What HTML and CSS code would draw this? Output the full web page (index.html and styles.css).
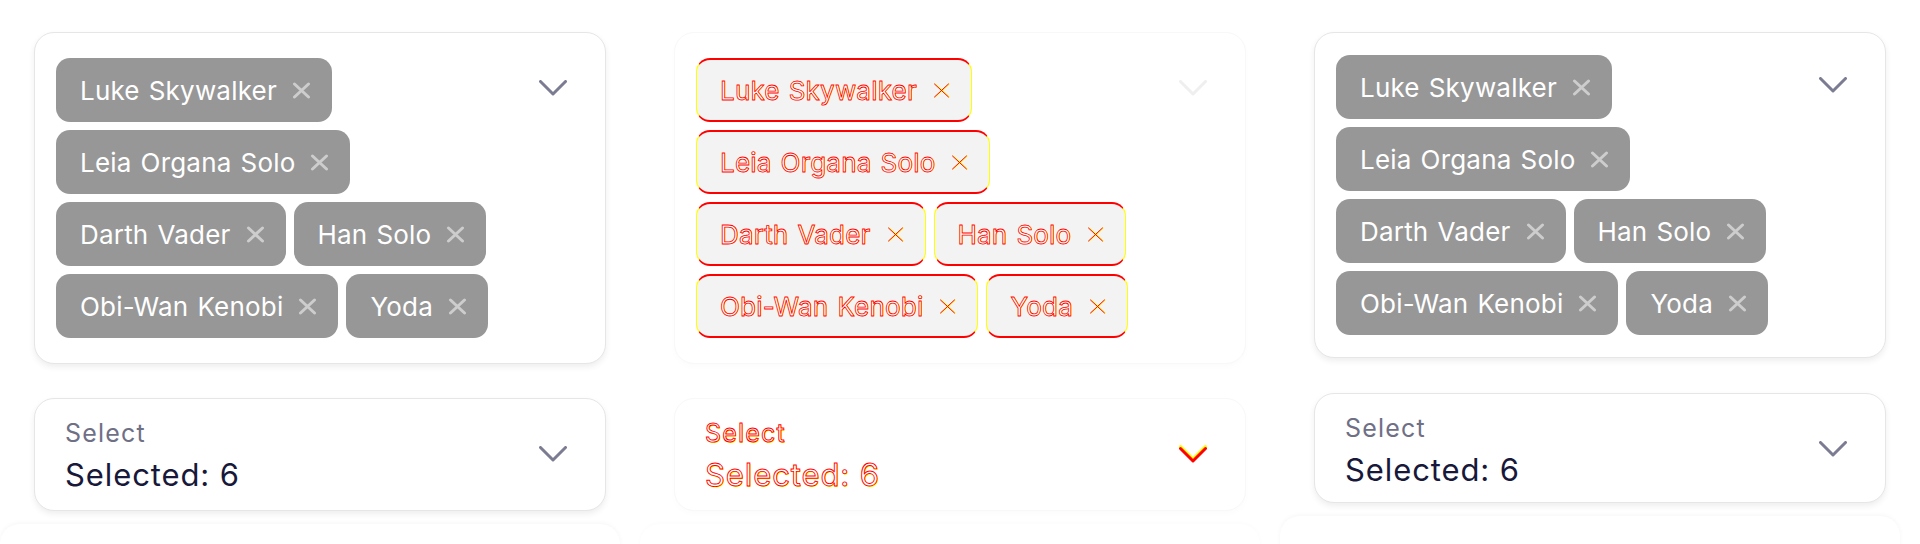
FILE: index.html
```html
<!DOCTYPE html>
<html lang="en">
<head>
<meta charset="utf-8">
<title>Multi select</title>
<link rel="stylesheet" href="styles.css">
</head>
<body>
<div class="grid">
  <section class="col col-a">
    <div class="card">
      <div class="chips">
        <span class="chip"><span class="chip-label">Luke Skywalker</span><svg class="chip-x" viewBox="0 0 19 17"><path d="M2.5 2 L16.5 15 M16.5 2 L2.5 15"/></svg></span>
        <span class="chip"><span class="chip-label">Leia Organa Solo</span><svg class="chip-x" viewBox="0 0 19 17"><path d="M2.5 2 L16.5 15 M16.5 2 L2.5 15"/></svg></span>
        <span class="chip"><span class="chip-label">Darth Vader</span><svg class="chip-x" viewBox="0 0 19 17"><path d="M2.5 2 L16.5 15 M16.5 2 L2.5 15"/></svg></span>
        <span class="chip"><span class="chip-label">Han Solo</span><svg class="chip-x" viewBox="0 0 19 17"><path d="M2.5 2 L16.5 15 M16.5 2 L2.5 15"/></svg></span>
        <span class="chip"><span class="chip-label">Obi-Wan Kenobi</span><svg class="chip-x" viewBox="0 0 19 17"><path d="M2.5 2 L16.5 15 M16.5 2 L2.5 15"/></svg></span>
        <span class="chip"><span class="chip-label">Yoda</span><svg class="chip-x" viewBox="0 0 19 17"><path d="M2.5 2 L16.5 15 M16.5 2 L2.5 15"/></svg></span>
      </div>
      <svg class="chev" viewBox="0 0 28 16"><path d="M1.5 1.5 L14 14 L26.5 1.5"/></svg>
    </div>
    <div class="select">
      <div class="select-text">
        <div class="select-label">Select</div>
        <div class="select-value">Selected: 6</div>
      </div>
      <svg class="chev" viewBox="0 0 28 16"><path d="M1.5 1.5 L14 14 L26.5 1.5"/></svg>
    </div>
    <div class="tail"></div>
  </section>

  <section class="col col-b">
    <div class="card">
      <div class="chips">
        <span class="chip"><span class="chip-label">Luke Skywalker</span><svg class="chip-x" viewBox="0 0 19 17"><path class="x-y" d="M3.5 2 L17.5 15 M17.5 2 L3.5 15"/><path d="M2.5 2 L16.5 15 M16.5 2 L2.5 15"/></svg></span>
        <span class="chip"><span class="chip-label">Leia Organa Solo</span><svg class="chip-x" viewBox="0 0 19 17"><path class="x-y" d="M3.5 2 L17.5 15 M17.5 2 L3.5 15"/><path d="M2.5 2 L16.5 15 M16.5 2 L2.5 15"/></svg></span>
        <span class="chip"><span class="chip-label">Darth Vader</span><svg class="chip-x" viewBox="0 0 19 17"><path class="x-y" d="M3.5 2 L17.5 15 M17.5 2 L3.5 15"/><path d="M2.5 2 L16.5 15 M16.5 2 L2.5 15"/></svg></span>
        <span class="chip"><span class="chip-label">Han Solo</span><svg class="chip-x" viewBox="0 0 19 17"><path class="x-y" d="M3.5 2 L17.5 15 M17.5 2 L3.5 15"/><path d="M2.5 2 L16.5 15 M16.5 2 L2.5 15"/></svg></span>
        <span class="chip"><span class="chip-label">Obi-Wan Kenobi</span><svg class="chip-x" viewBox="0 0 19 17"><path class="x-y" d="M3.5 2 L17.5 15 M17.5 2 L3.5 15"/><path d="M2.5 2 L16.5 15 M16.5 2 L2.5 15"/></svg></span>
        <span class="chip"><span class="chip-label">Yoda</span><svg class="chip-x" viewBox="0 0 19 17"><path class="x-y" d="M3.5 2 L17.5 15 M17.5 2 L3.5 15"/><path d="M2.5 2 L16.5 15 M16.5 2 L2.5 15"/></svg></span>
      </div>
      <svg class="chev" viewBox="0 0 28 16"><path d="M1.5 1.5 L14 14 L26.5 1.5"/></svg>
    </div>
    <div class="select">
      <div class="select-text">
        <div class="select-label">Select</div>
        <div class="select-value">Selected: 6</div>
      </div>
      <svg class="chev chev-diff" viewBox="0 0 28 18"><path class="chev-y" d="M1.5 1.5 L14 14 L26.5 1.5"/><path d="M1.5 3.5 L14 16 L26.5 3.5"/></svg>
    </div>
    <div class="tail"></div>
  </section>

  <section class="col col-c">
    <div class="card">
      <div class="chips">
        <span class="chip"><span class="chip-label">Luke Skywalker</span><svg class="chip-x" viewBox="0 0 19 17"><path d="M2.5 2 L16.5 15 M16.5 2 L2.5 15"/></svg></span>
        <span class="chip"><span class="chip-label">Leia Organa Solo</span><svg class="chip-x" viewBox="0 0 19 17"><path d="M2.5 2 L16.5 15 M16.5 2 L2.5 15"/></svg></span>
        <span class="chip"><span class="chip-label">Darth Vader</span><svg class="chip-x" viewBox="0 0 19 17"><path d="M2.5 2 L16.5 15 M16.5 2 L2.5 15"/></svg></span>
        <span class="chip"><span class="chip-label">Han Solo</span><svg class="chip-x" viewBox="0 0 19 17"><path d="M2.5 2 L16.5 15 M16.5 2 L2.5 15"/></svg></span>
        <span class="chip"><span class="chip-label">Obi-Wan Kenobi</span><svg class="chip-x" viewBox="0 0 19 17"><path d="M2.5 2 L16.5 15 M16.5 2 L2.5 15"/></svg></span>
        <span class="chip"><span class="chip-label">Yoda</span><svg class="chip-x" viewBox="0 0 19 17"><path d="M2.5 2 L16.5 15 M16.5 2 L2.5 15"/></svg></span>
      </div>
      <svg class="chev" viewBox="0 0 28 16"><path d="M1.5 1.5 L14 14 L26.5 1.5"/></svg>
    </div>
    <div class="select">
      <div class="select-text">
        <div class="select-label">Select</div>
        <div class="select-value">Selected: 6</div>
      </div>
      <svg class="chev" viewBox="0 0 28 16"><path d="M1.5 1.5 L14 14 L26.5 1.5"/></svg>
    </div>
    <div class="tail"></div>
  </section>
</div>
</body>
</html>
```
FILE: styles.css
```css
html, body {
  margin: 0;
  padding: 0;
  background: #ffffff;
}
body {
  width: 1920px;
  height: 544px;
  overflow: hidden;
  font-family: Inter, "Liberation Sans", sans-serif;
}
.grid {
  display: grid;
  grid-template-columns: repeat(3, 640px);
  height: 544px;
  overflow: hidden;
}
.col {
  padding-top: 32px;
}
.card {
  margin: 0 34px;
  border: 1px solid #e6e6e6;
  border-radius: 20px;
  background: #fff;
  box-shadow: 0 3px 6px rgba(0, 0, 0, 0.07);
  padding: 25px 22px 25px 21px;
  display: flex;
  align-items: flex-start;
}
.chips {
  flex: 1;
  display: flex;
  flex-wrap: wrap;
  gap: 8px;
  margin-right: 16px;
}
.chip {
  box-sizing: border-box;
  height: 64px;
  display: flex;
  align-items: center;
  gap: 15px;
  padding: 1px 21px 0 24px;
  border-radius: 14px;
  background: #979797;
  color: #ffffff;
  font-size: 26px;
  line-height: 32px;
  letter-spacing: 0.2px;
  word-spacing: 1.5px;
}
.chip-x {
  width: 19px;
  height: 17px;
  flex: none;
}
.chip-x path {
  fill: none;
  stroke: #cdcdcd;
  stroke-width: 3;
  stroke-linecap: round;
}
.chev {
  width: 28px;
  height: 16px;
  flex: none;
  margin-top: 22px;
  margin-right: 16px;
}
.chev path {
  fill: none;
  stroke: #7b7b92;
  stroke-width: 3;
  stroke-linecap: round;
  stroke-linejoin: round;
}
.select {
  margin: 34px 34px 0;
  border: 1px solid #e6e6e6;
  border-radius: 20px;
  background: #fff;
  box-shadow: 0 3px 6px rgba(0, 0, 0, 0.07);
  padding: 19px 22px 16px 30px;
  display: flex;
  align-items: center;
}
.select .chev {
  margin-top: 0;
  margin-bottom: 4px;
}
.select-text {
  flex: 1;
}
.select-label {
  font-size: 25px;
  line-height: 30px;
  color: #6f6f86;
  letter-spacing: 1.2px;
}
.select-value {
  margin-top: 8px;
  font-size: 31px;
  line-height: 38px;
  color: #17183a;
  letter-spacing: 0.9px;
}
.tail {
  margin-top: 13px;
  width: 620px;
  height: 60px;
  border-radius: 20px;
  background: #fff;
  box-shadow: 0 -1px 5px rgba(0, 0, 0, 0.04);
}

/* middle column: diff-style rendering */
.col-b .card,
.col-b .select {
  border-color: #f8f8f8;
  box-shadow: 0 3px 6px rgba(0, 0, 0, 0.015);
}
.col-b .chip {
  background: #f3f3f3;
  border-top: 2px solid #ff0000;
  border-bottom: 2px solid #ff0000;
  border-left: 1px solid #ffff00;
  border-right: 1px solid #ffff00;
  padding-left: 23px;
  padding-right: 20px;
  color: #ffffff;
  -webkit-text-stroke: 0.8px #ff0000;
  text-shadow: 1px 0 0 rgba(255, 255, 0, 0.9);
}
.col-b .chip-x path {
  stroke: #ff0000;
  stroke-width: 1;
}
.col-b .chip-x path.x-y {
  stroke: #ffff00;
}
.col-b .card > .chev path {
  stroke: #efefef;
}
.col-b .select-label,
.col-b .select-value {
  color: #ffffff;
  -webkit-text-stroke: 0.9px #ff0000;
  text-shadow: 1px 1px 0 #ffff00;
}
.chev-diff {
  height: 18px;
}
.chev-diff path {
  stroke: #ff0000;
}
.chev-diff path.chev-y {
  stroke: #ffff00;
}
.col-b .tail {
  box-shadow: 0 -1px 5px rgba(0, 0, 0, 0.02);
}

/* right column: slightly tighter */
.col-c .card {
  padding-top: 22px;
  padding-bottom: 22px;
}
.col-c .select {
  margin-top: 35px;
  padding-bottom: 13px;
}
```
